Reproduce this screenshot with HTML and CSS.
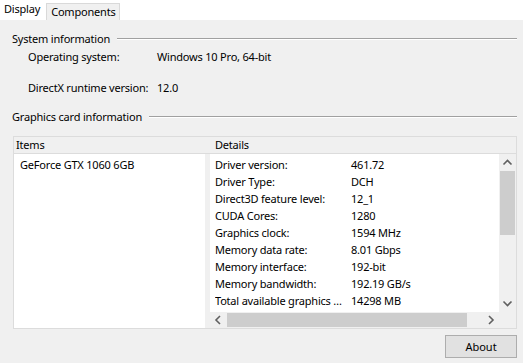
FILE: index.html
```html
<!DOCTYPE html>
<html lang="en">
<head>
    <meta charset="UTF-8">
    <title>Display</title>
    <link rel="stylesheet" href="styles.css">
</head>
<body>

<!-- Tab strip -->
<div class="tabs">
    <div class="tab active">Display</div>
    <div class="tab">Components</div>
</div>

<div class="panel">

    <!-- System information -->
    <div class="group-title">
        <span>System information</span>
        <div class="rule"></div>
    </div>
    <div class="info-row">
        <span class="info-label">Operating system:</span>
        <span>Windows 10 Pro, 64-bit</span>
    </div>
    <div class="info-row second">
        <span class="info-label">DirectX runtime version:</span>
        <span>12.0</span>
    </div>

    <!-- Graphics card information -->
    <div class="group-title graphics">
        <span>Graphics card information</span>
        <div class="rule"></div>
    </div>

    <div class="card-box">
        <div class="card-header">
            <div class="col-items">Items</div>
            <div class="col-details">Details</div>
        </div>
        <div class="card-body">
            <div class="items-list">
                <div class="item">GeForce GTX 1060 6GB</div>
            </div>
            <div class="details">
                <div class="details-main">
                    <div class="details-list">
                        <div class="detail"><span class="d-label">Driver version:</span><span>461.72</span></div>
                        <div class="detail"><span class="d-label">Driver Type:</span><span>DCH</span></div>
                        <div class="detail"><span class="d-label">Direct3D feature level:</span><span>12_1</span></div>
                        <div class="detail"><span class="d-label">CUDA Cores:</span><span>1280</span></div>
                        <div class="detail"><span class="d-label">Graphics clock:</span><span>1594 MHz</span></div>
                        <div class="detail"><span class="d-label">Memory data rate:</span><span>8.01 Gbps</span></div>
                        <div class="detail"><span class="d-label">Memory interface:</span><span>192-bit</span></div>
                        <div class="detail"><span class="d-label">Memory bandwidth:</span><span>192.19 GB/s</span></div>
                        <div class="detail"><span class="d-label">Total available graphics …</span><span>14298 MB</span></div>
                    </div>
                    <div class="vscroll">
                        <svg class="arrow" width="17" height="17" viewBox="0 0 17 17"><path d="M4.5 10.5 L8.5 6.5 L12.5 10.5" fill="none" stroke="#606060" stroke-width="1.6"/></svg>
                        <div class="vthumb"></div>
                        <div class="spacer"></div>
                        <svg class="arrow" width="17" height="17" viewBox="0 0 17 17"><path d="M4.5 6.5 L8.5 10.5 L12.5 6.5" fill="none" stroke="#606060" stroke-width="1.6"/></svg>
                    </div>
                </div>
                <div class="hscroll-row">
                    <div class="hscroll">
                        <svg class="arrow" width="17" height="16" viewBox="0 0 17 16"><path d="M10 4 L6 8 L10 12" fill="none" stroke="#606060" stroke-width="1.6"/></svg>
                        <div class="hthumb"></div>
                        <div class="spacer"></div>
                        <svg class="arrow" width="17" height="16" viewBox="0 0 17 16"><path d="M7 4 L11 8 L7 12" fill="none" stroke="#606060" stroke-width="1.6"/></svg>
                    </div>
                    <div class="corner"></div>
                </div>
            </div>
        </div>
    </div>

    <div class="buttons">
        <button class="about">About</button>
    </div>
</div>

</body>
</html>
```

FILE: styles.css
```css
body {
    margin: 0;
    font-family: "Noto Sans", "Liberation Sans", sans-serif;
    font-size: 11px;
    letter-spacing: -0.2px;
    color: #000;
    background-color: #f0f0f0;
    width: 523px;
    height: 363px;
    overflow: hidden;
}

/* Tabs */
.tabs {
    display: flex;
    align-items: flex-end;
    height: 20px;
    background-color: #fff;
}

.tab {
    height: 17px;
    line-height: 16px;
    padding: 0 4px;
    background-color: #f0f0f0;
    border: 1px solid #d9d9d9;
    border-bottom: none;
    box-sizing: border-box;
}

.tab.active {
    height: 20px;
    line-height: 18px;
    background-color: #fff;
    border: none;
    padding: 0 5px 0 4px;
    margin-right: 1px;
}

/* Panel */
.panel {
    margin-left: 2px;
    width: 515px;
    padding-top: 10px;
    background-color: #f0f0f0;
}

.group-title {
    display: flex;
    align-items: center;
    gap: 7px;
    height: 17px;
    line-height: 17px;
    padding-left: 10px;
}

.group-title .rule {
    flex: 1;
    height: 0;
    border-top: 1px solid #a0a0a0;
    border-bottom: 1px solid #fff;
    margin-top: 1px;
}

.group-title.graphics {
    margin-top: 12px;
}

.info-row {
    display: flex;
    height: 17px;
    line-height: 17px;
    padding-left: 26px;
    margin-top: 1px;
    white-space: nowrap;
}

.info-row.second {
    margin-top: 14px;
}

.info-label {
    width: 129px;
}

/* Graphics card box */
.card-box {
    margin: 11px 0 0 11px;
    width: 504px;
    border: 1px solid #dcdcdc;
    box-sizing: border-box;
}

.card-header {
    display: flex;
    height: 16px;
    line-height: 16px;
    border-bottom: 1px solid #dcdcdc;
}

.col-items {
    width: 196px;
    padding-left: 2px;
}

.col-details {
    padding-left: 3px;
}

.card-body {
    display: flex;
    gap: 5px;
    height: 174px;
}

.items-list {
    width: 191px;
    background-color: #fff;
    padding-top: 2px;
}

.item {
    height: 17px;
    line-height: 17px;
    padding-left: 6px;
}

.details {
    flex: 1;
    display: flex;
    flex-direction: column;
}

.details-main {
    display: flex;
    height: 158px;
}

.details-list {
    flex: 1;
    background-color: #fff;
    padding-top: 2px;
    overflow: hidden;
}

.detail {
    display: flex;
    height: 17px;
    line-height: 17px;
    padding-left: 5px;
    white-space: nowrap;
}

.d-label {
    width: 131px;
    margin-right: 5px;
    overflow: hidden;
}

/* Scrollbars */
.vscroll {
    width: 17px;
    display: flex;
    flex-direction: column;
    background-color: #f0f0f0;
}

.vthumb {
    margin: 0 1px;
    height: 64px;
    background-color: #cdcdcd;
}

.spacer {
    flex: 1;
}

.hscroll-row {
    display: flex;
    height: 16px;
}

.hscroll {
    flex: 1;
    display: flex;
    align-items: stretch;
}

.hthumb {
    width: 240px;
    margin: 1px 0;
    background-color: #cdcdcd;
}

.corner {
    width: 17px;
}

.arrow {
    display: block;
    flex: none;
}

/* Bottom button */
.buttons {
    display: flex;
    justify-content: flex-end;
    padding-top: 6px;
}

.about {
    width: 72px;
    height: 23px;
    font-family: inherit;
    font-size: 11px;
    background-color: #e1e1e1;
    border: 1px solid #adadad;
    padding: 0;
    color: #000;
}
```
